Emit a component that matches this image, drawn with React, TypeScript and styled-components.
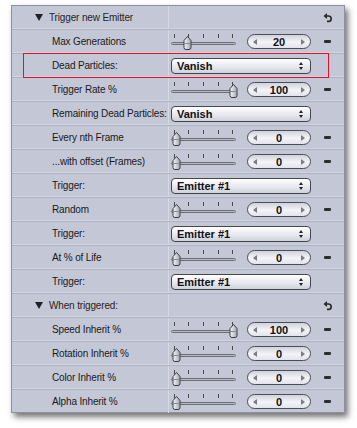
import React from 'react';
import styled, { createGlobalStyle } from 'styled-components';

const GlobalStyle = createGlobalStyle`
  html, body {
    margin: 0;
    padding: 0;
    background: #ffffff;
  }
  body {
    font-family: "Liberation Sans", Arial, sans-serif;
  }
`;

const Page = styled.div`
  width: 357px;
  height: 428px;
  padding: 5px 0 0 11px;
  box-sizing: border-box;
`;

const Panel = styled.div`
  width: 334px;
  background: #c4c7d6;
  border: 1px solid #8e919c;
  box-sizing: border-box;
  box-shadow: 3px 4px 6px rgba(0, 0, 0, 0.55);
  display: flex;
  flex-direction: column;
`;

const Row = styled.div`
  position: relative;
  display: grid;
  grid-template-columns: 157px 1fr;
  height: 24px;
  border-bottom: 1px solid #aeb1bf;
  box-shadow: inset 0 -1px 0 #d2d5df;
  box-sizing: border-box;

  &:last-child {
    border-bottom: none;
    box-shadow: none;
    height: 22px;
  }
`;

const LabelCell = styled.div<{ $header?: boolean }>`
  display: flex;
  align-items: center;
  padding-left: ${(p) => (p.$header ? '23px' : '40px')};
  font-size: 10px;
  letter-spacing: -0.15px;
  color: ${(p) => (p.$header ? '#2b2519' : '#1a1a1a')};
  border-right: 1px solid #d6d9e2;
  white-space: nowrap;
`;

const Triangle = styled.span`
  display: inline-block;
  width: 0;
  height: 0;
  border-left: 4px solid transparent;
  border-right: 4px solid transparent;
  border-top: 7px solid #222;
  margin-right: 6px;
`;

const ControlCell = styled.div`
  display: flex;
  align-items: center;
  padding-left: 2px;
`;

const HeaderControls = styled.div`
  flex: 1;
  display: flex;
  justify-content: flex-end;
  padding-right: 12px;
`;

const SliderBox = styled.div`
  position: relative;
  width: 68px;
  height: 23px;
  flex: none;
`;

const Tick = styled.div`
  position: absolute;
  top: 4px;
  width: 1px;
  height: 4px;
  background: #4a4a4a;
`;

const Track = styled.div`
  position: absolute;
  left: 0;
  top: 12px;
  width: 65px;
  height: 3px;
  border-radius: 2px;
  background: linear-gradient(#7c7f88, #f2f3f6);
  border: 1px solid #6d7079;
  box-sizing: border-box;
`;

const Knob = styled.svg`
  position: absolute;
  top: 6px;
`;

const ValueField = styled.div`
  margin-left: 8px;
  width: 64px;
  height: 15px;
  border: 1px solid #4d4f57;
  border-radius: 8px;
  box-sizing: border-box;
  background: linear-gradient(#d0d3dc, #f3f4f8 55%, #e2e4ea);
  display: flex;
  align-items: center;
  justify-content: space-between;
  padding: 0 5px;
  font-size: 11px;
  font-weight: bold;
  color: #111;
`;

const Arrow = styled.span<{ $dir: 'left' | 'right' }>`
  width: 0;
  height: 0;
  border-top: 3px solid transparent;
  border-bottom: 3px solid transparent;
  ${(p) =>
    p.$dir === 'left'
      ? 'border-right: 4px solid #7a7c84;'
      : 'border-left: 4px solid #7a7c84;'}
`;

const Minus = styled.div`
  margin-left: 13px;
  width: 7px;
  height: 3px;
  background: #2e2f33;
  border-radius: 1px;
`;

const Popup = styled.div`
  width: 140px;
  height: 16px;
  border: 1px solid #45474e;
  border-radius: 4px;
  box-sizing: border-box;
  background: linear-gradient(#ffffff, #e4e6ec 60%, #cfd2da);
  display: flex;
  align-items: center;
  justify-content: space-between;
  padding: 0 7px 0 5px;
  font-size: 11px;
  font-weight: bold;
  color: #111;
`;

const Stepper = styled.span`
  display: flex;
  flex-direction: column;
  gap: 2px;

  &::before,
  &::after {
    content: '';
    width: 0;
    height: 0;
    border-left: 2px solid transparent;
    border-right: 2px solid transparent;
  }
  &::before {
    border-bottom: 3px solid #222;
  }
  &::after {
    border-top: 3px solid #222;
  }
`;

const Highlight = styled.div`
  position: absolute;
  left: 11px;
  top: -1px;
  width: 306px;
  height: 25px;
  border: 1px solid #e3122a;
  box-sizing: border-box;
  pointer-events: none;
`;

const UndoIcon = () => (
  <svg width="9" height="10" viewBox="0 0 9 10">
    <path d="M0.5 3 L4 0 L4 6 Z" fill="#2a2a2a" />
    <path d="M3.5 3 H5.5 A2.6 2.6 0 0 1 5.5 8.4 H4" stroke="#2a2a2a" strokeWidth="1.6" fill="none" />
  </svg>
);

const Slider = ({ pos }: { pos: number }) => {
  const knobX = 1 + pos * 57;
  return (
    <SliderBox>
      {[3, 17, 32, 47, 61].map((x) => (
        <Tick key={x} style={{ left: x }} />
      ))}
      <Track />
      <Knob width="9" height="14" viewBox="0 0 9 14" style={{ left: knobX }}>
        <defs>
          <linearGradient id="kg" x1="0" x2="1">
            <stop offset="0" stopColor="#f6f7fa" />
            <stop offset="1" stopColor="#a4a7b1" />
          </linearGradient>
        </defs>
        <path
          d="M4.5 0.5 L8 4.5 L8 11.5 Q8 13.5 6 13.5 L3 13.5 Q1 13.5 1 11.5 L1 4.5 Z"
          fill="url(#kg)"
          stroke="#3c3e44"
          strokeWidth="1"
        />
        <path d="M1.5 7.5 H7.5" stroke="#8a8d96" strokeWidth="1" />
      </Knob>
    </SliderBox>
  );
};

type Item =
  | { kind: 'header'; label: string }
  | { kind: 'slider'; label: string; value: string; pos: number }
  | { kind: 'popup'; label: string; value: string; marked?: boolean };

const items: Item[] = [
  { kind: 'header', label: 'Trigger new Emitter' },
  { kind: 'slider', label: 'Max Generations', value: '20', pos: 0.2 },
  { kind: 'popup', label: 'Dead Particles:', value: 'Vanish', marked: true },
  { kind: 'slider', label: 'Trigger Rate %', value: '100', pos: 1 },
  { kind: 'popup', label: 'Remaining Dead Particles:', value: 'Vanish' },
  { kind: 'slider', label: 'Every nth Frame', value: '0', pos: 0 },
  { kind: 'slider', label: '...with offset (Frames)', value: '0', pos: 0 },
  { kind: 'popup', label: 'Trigger:', value: 'Emitter #1' },
  { kind: 'slider', label: 'Random', value: '0', pos: 0 },
  { kind: 'popup', label: 'Trigger:', value: 'Emitter #1' },
  { kind: 'slider', label: 'At % of Life', value: '0', pos: 0 },
  { kind: 'popup', label: 'Trigger:', value: 'Emitter #1' },
  { kind: 'header', label: 'When triggered:' },
  { kind: 'slider', label: 'Speed Inherit %', value: '100', pos: 1 },
  { kind: 'slider', label: 'Rotation Inherit %', value: '0', pos: 0 },
  { kind: 'slider', label: 'Color Inherit %', value: '0', pos: 0 },
  { kind: 'slider', label: 'Alpha Inherit %', value: '0', pos: 0 },
];

const App = () => (
  <Page>
    <GlobalStyle />
    <Panel>
      {items.map((item, i) => (
        <Row key={i}>
          {item.kind === 'header' ? (
            <>
              <LabelCell $header>
                <Triangle />
                {item.label}
              </LabelCell>
              <ControlCell>
                <HeaderControls>
                  <UndoIcon />
                </HeaderControls>
              </ControlCell>
            </>
          ) : (
            <>
              <LabelCell>{item.label}</LabelCell>
              <ControlCell>
                {item.kind === 'slider' ? (
                  <>
                    <Slider pos={item.pos} />
                    <ValueField>
                      <Arrow $dir="left" />
                      {item.value}
                      <Arrow $dir="right" />
                    </ValueField>
                    <Minus />
                  </>
                ) : (
                  <Popup>
                    {item.value}
                    <Stepper />
                  </Popup>
                )}
              </ControlCell>
              {item.kind === 'popup' && item.marked && <Highlight />}
            </>
          )}
        </Row>
      ))}
    </Panel>
  </Page>
);

export default App;
